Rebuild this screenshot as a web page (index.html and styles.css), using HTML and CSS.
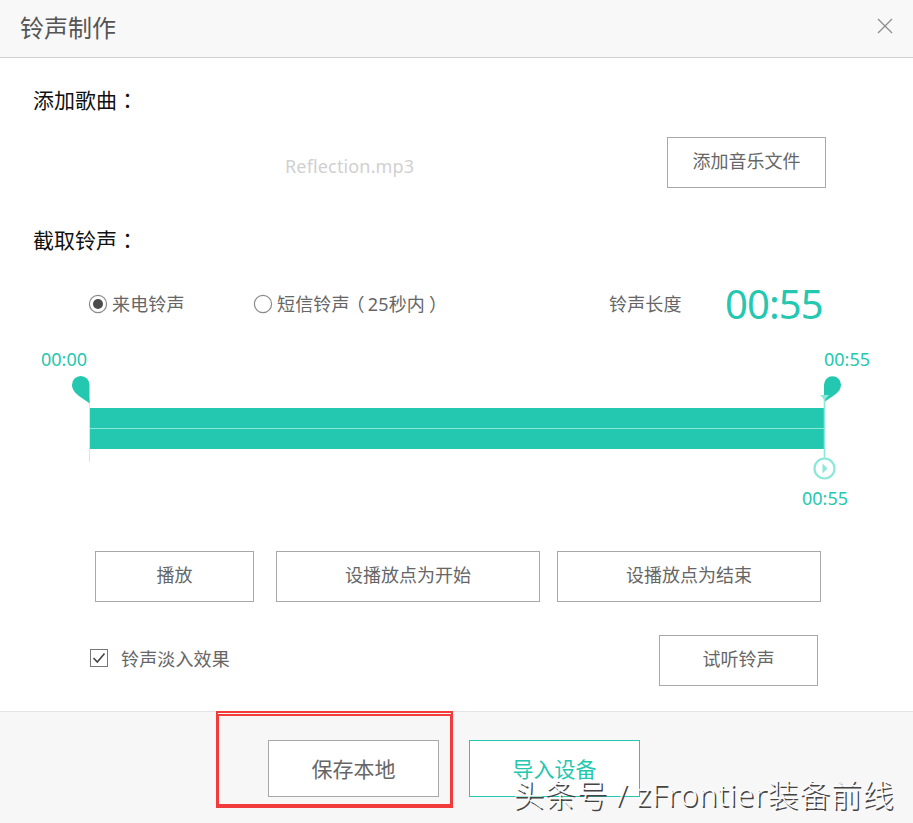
FILE: index.html
```html
<!DOCTYPE html>
<html lang="zh-CN">
<head>
<meta charset="utf-8">
<title>铃声制作</title>
<link rel="stylesheet" href="styles.css">
</head>
<body>
<div class="dialog">
  <header class="header">
    <span class="title">铃声制作</span>
    <svg class="close" width="16" height="16" viewBox="0 0 16 16"><path d="M1 1L15 15M15 1L1 15" fill="none" stroke="#8c8c8c" stroke-width="1.3"/></svg>
  </header>
  <main class="main">
    <h2 class="section">添加歌曲<span class="colon" lang="zh-TW">：</span></h2>
    <div class="row file-row">
      <span class="filename">Reflection.mp3</span>
      <button class="btn btn-s">添加音乐文件</button>
    </div>
    <h2 class="section">截取铃声<span class="colon" lang="zh-TW">：</span></h2>
    <div class="row kind-row">
      <label class="kind kind-call"><svg width="20" height="20" viewBox="0 0 20 20"><circle cx="10" cy="10" r="8.6" fill="#fff" stroke="#8a8a8a" stroke-width="1.2"/><circle cx="10" cy="10" r="5" fill="#4c4c4c"/></svg><span>来电铃声</span></label>
      <label class="kind kind-sms"><svg width="20" height="20" viewBox="0 0 20 20"><circle cx="10" cy="10" r="8.6" fill="#fff" stroke="#8a8a8a" stroke-width="1.2"/></svg><span>短信铃声<span class="open">（</span>25秒内<span class="shut">）</span></span></label>
      <span class="len-label">铃声长度</span>
      <span class="len">00:55</span>
    </div>
    <div class="row times"><span>00:00</span><span>00:55</span></div>
    <div class="track">
      <svg class="pin pin-start" width="18" height="86" viewBox="0 0 18 86"><path d="M17.5 22V86" stroke="#cfe9ee" fill="none"/><path d="M17.5 27.5C12 22.5 0 18 0 8.8A8.75 8.75 0 0 1 17.5 8.8Z" fill="#24c8b0"/></svg>
      <div class="bar"></div>
      <svg class="pin pin-end" width="30" height="106" viewBox="0 0 30 106"><path d="M12 26.500V8.800A8.500 8.500 0 0 1 29 8.800C29 17.500 18 21 12 26.500Z" fill="#24c8b0"/><path d="M8 19H17L12.500 24Z" fill="#8ce8d8"/><path d="M12.500 22V82" stroke="#8ce8d8" stroke-width="1.600"/><circle cx="12.500" cy="92.500" r="10" fill="#fff" stroke="#8ce8d8" stroke-width="2.200"/><path d="M10.500 87.500L15.500 92.500L10.500 97.500Z" fill="#8ce8d8"/></svg>
    </div>
    <div class="row cursor-time"><span>00:55</span></div>
    <div class="row actions">
      <button class="btn btn-s">播放</button>
      <button class="btn btn-l">设播放点为开始</button>
      <button class="btn btn-l">设播放点为结束</button>
    </div>
    <div class="row fade-row">
      <label class="fade"><svg width="20" height="20" viewBox="0 0 20 20"><rect x="1.500" y="1.500" width="17" height="17" fill="#fff" stroke="#777"/><path d="M4.500 10L8.300 14L15.500 5.500" fill="none" stroke="#444" stroke-width="1.600"/></svg><span>铃声淡入效果</span></label>
      <button class="btn btn-s">试听铃声</button>
    </div>
  </main>
  <footer class="footer">
    <button class="btn btn-f">保存本地</button>
    <button class="btn btn-f accent">导入设备</button>
  </footer>
  <div class="highlight"></div>
  <div class="watermark">头条号 / zFrontier装备前线</div>
</div>
</body>
</html>
```
FILE: styles.css
```css
* { box-sizing: border-box; }
body {
  margin: 0;
  background: #fff;
  font-family: "Noto Sans", "Noto Sans CJK SC", sans-serif;
  font-size: 18px;
  color: #666;
}
.dialog {
  position: relative;
  width: 913px;
  height: 823px;
  overflow: hidden;
  display: flex;
  flex-direction: column;
  white-space: nowrap;
}
.header {
  height: 58px;
  flex: none;
  display: flex;
  align-items: center;
  justify-content: space-between;
  padding: 0 20px 2px 20px;
  background: #f8f8f8;
  border-bottom: 1px solid #d0d0d0;
}
.title { font-size: 24px; line-height: 30px; color: #555; }
.close { margin-top: -3px; }
.main { height: 653px; flex: none; }
.row { display: flex; align-items: center; }
.section {
  margin: 0;
  padding-left: 33px;
  height: 40px;
  font-size: 21px;
  line-height: 38px;
  font-weight: 400;
  color: #111;
}
.section:first-child { margin-top: 22px; }
.colon { font-family: "Noto Sans CJK TC", sans-serif; }
.btn {
  flex: none;
  padding: 0 0 3px;
  border: 1px solid #a8a8a8;
  border-radius: 0;
  background: #fff;
  color: #666;
  font: inherit;
  line-height: 24px;
}
.btn-s { width: 159px; height: 51px; }
.btn-l { width: 264px; height: 51px; }
.file-row {
  height: 51px;
  margin: 17px 0 32px;
  padding: 0 87px 0 285px;
  justify-content: space-between;
}
.filename { color: #d0d0d0; letter-spacing: 0.150px; margin-top: 6px; }
.kind-row { height: 56px; margin-top: 16px; }
.kind { display: flex; align-items: center; }
.kind svg { margin: -1px 4px 0 0; }
.kind > span, .len-label { margin-top: -2px; letter-spacing: 0.150px; }
.kind-call { margin-left: 88px; width: 165px; flex: none; }
.kind-sms { width: 356px; flex: none; }
.shut { margin-left: 4px; }
.open { margin-left: -3px; margin-right: 3px; }
.len-label { width: 116px; flex: none; }
.len { font-size: 40px; line-height: 50px; letter-spacing: -0.900px; color: #24c8b0; }
.times {
  height: 24px;
  margin-top: 15px;
  padding: 0 43px 0 41px;
  justify-content: space-between;
  color: #24c8b0;
}
.track { position: relative; height: 76px; margin-top: 1px; padding: 36px 88px 0 89px; }
.bar { height: 41px; background: linear-gradient(#24c8b0 20px, #8ce8d8 20px, #8ce8d8 21px, #24c8b0 21px); }
.pin { position: absolute; top: 4px; }
.pin-start { left: 72px; }
.pin-end { left: 812px; top: 4px; }
.cursor-time { height: 24px; margin-top: 38px; padding-left: 802px; color: #24c8b0; }
.actions { margin-top: 41px; padding-left: 95px; }
.actions .btn-s { margin-right: 22px; }
.actions .btn-l { margin-right: 17px; }
.fade-row {
  margin-top: 33px;
  padding: 0 95px 0 89px;
  justify-content: space-between;
}
.fade { display: flex; align-items: center; margin-top: -5px; letter-spacing: 0.150px; }
.fade svg { margin-right: 12px; }
.footer {
  height: 112px;
  flex: none;
  display: flex;
  gap: 30px;
  padding: 28px 0 0 268px;
  background: #f7f7f7;
  border-top: 1px solid #e4e4e4;
}
.btn-f { width: 171px; height: 57px; padding: 0; font-size: 21px; }
.accent { border-color: #24c8b0; color: #24c8b0; }
.highlight {
  position: absolute;
  left: 216px;
  top: 711px;
  width: 237px;
  height: 97px;
  border: 3px solid #f23b3b;
  border-top: 5px double #f23b3b;
  border-bottom-width: 4px;
}
.watermark {
  position: absolute;
  left: 513px;
  top: 773px;
  font-size: 31px;
  line-height: 42px;
  font-weight: 300;
  letter-spacing: 0.600px;
  color: #fafafa;
  text-shadow: 1.500px 1.500px 0.500px #444;
}
```
